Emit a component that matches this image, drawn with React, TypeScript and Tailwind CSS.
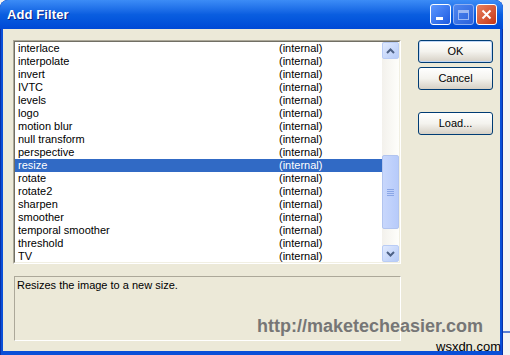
const filters: string[] = [
  'interlace',
  'interpolate',
  'invert',
  'IVTC',
  'levels',
  'logo',
  'motion blur',
  'null transform',
  'perspective',
  'resize',
  'rotate',
  'rotate2',
  'sharpen',
  'smoother',
  'temporal smoother',
  'threshold',
  'TV',
];

const font = "font-['Liberation_Sans',Arial,sans-serif]";

const XpButton = ({ label, isDefault }: { label: string; isDefault?: boolean }) => (
  <div
    className={`h-[23px] w-[75px] rounded-[3px] border ${
      isDefault ? 'border-[#003c74] shadow-[inset_0_0_0_1px_#c0d6f5]' : 'border-[#003c74]'
    } bg-gradient-to-b from-[#ffffff] via-[#f4f3ee] to-[#d6d0c5] flex items-center justify-center text-[11px] text-black`}
  >
    {label}
  </div>
);

const ScrollArrow = ({ up }: { up?: boolean }) => (
  <div className="h-[17px] w-[17px] rounded-[2px] border border-[#b9ccf5] bg-gradient-to-br from-[#e1eafe] to-[#b6cbf7] flex items-center justify-center">
    <svg width="9" height="6" viewBox="0 0 9 6">
      <path
        d={up ? 'M1 5 L4.5 1.5 L8 5' : 'M1 1 L4.5 4.5 L8 1'}
        stroke="#4d6185"
        strokeWidth="2"
        fill="none"
      />
    </svg>
  </div>
);

export default function App() {
  return (
    <div className={`relative flex h-[355px] w-[510px] overflow-hidden bg-[#f4f4f4] ${font}`}>
      {/* window */}
      <div className="flex h-[356px] w-[503px] shrink-0 flex-col rounded-t-[8px] bg-[#0a4fd8] shadow-[inset_0_0_0_1px_#0831a8]">
        {/* title bar */}
        <div className="flex h-[29px] items-center rounded-t-[8px] bg-gradient-to-b from-[#3c8cf6] via-[#0a5ee0] to-[#0049d6] pl-[7px] pr-[6px]">
          <span className="flex-1 text-[13px] font-bold tracking-[0.1px] text-white [text-shadow:1px_1px_0_#0a1d80]">
            Add Filter
          </span>
          <div className="flex gap-[2px]">
            <div className="flex h-[21px] w-[21px] items-end rounded-[3px] border border-white bg-gradient-to-br from-[#5d97ff] to-[#1d5ae0] pb-[4px] pl-[5px]">
              <div className="h-[3px] w-[7px] bg-white" />
            </div>
            <div className="flex h-[21px] w-[21px] items-center justify-center rounded-[3px] border border-[#8eb0f2] bg-gradient-to-br from-[#4f86ef] to-[#2a62dc]">
              <div className="h-[10px] w-[11px] border border-t-[3px] border-[#9cb9f4]" />
            </div>
            <div className="flex h-[21px] w-[21px] items-center justify-center rounded-[3px] border border-white bg-gradient-to-br from-[#e8805f] to-[#c5330f]">
              <svg width="11" height="11" viewBox="0 0 11 11">
                <path d="M1.5 1.5 L9.5 9.5 M9.5 1.5 L1.5 9.5" stroke="white" strokeWidth="2" />
              </svg>
            </div>
          </div>
        </div>

        {/* client area */}
        <div className="mx-[3px] flex h-[322px] gap-[16px] bg-[#ece9d8] pl-[10px] pt-[11px]">
          <div className="flex w-[388px] flex-col gap-[12px]">
            {/* list box */}
            <div className="h-[224px] border border-b-white border-l-[#aca899] border-r-white border-t-[#aca899]">
              <div className="flex h-full border border-b-[#f1efe2] border-l-[#716f64] border-r-[#f1efe2] border-t-[#716f64] bg-white">
                <div className="flex-1 overflow-hidden text-[11px] leading-[13px] text-black">
                  {filters.map((name) => (
                    <div
                      key={name}
                      className={`flex h-[13px] pl-[3px] ${
                        name === 'resize' ? 'bg-[#316ac5] text-white' : ''
                      }`}
                    >
                      <span className="w-[261px]">{name}</span>
                      <span>(internal)</span>
                    </div>
                  ))}
                </div>
                {/* scrollbar */}
                <div className="flex w-[17px] flex-col bg-gradient-to-r from-[#f3f1ec] to-[#fefefb]">
                  <ScrollArrow up />
                  <div className="flex-1 pt-[96px]">
                    <div className="flex h-[74px] w-[17px] flex-col items-center justify-center gap-[1px] rounded-[2px] border border-[#b1c4ef] bg-gradient-to-r from-[#c8d7fc] to-[#b7cbfa]">
                      <div className="h-px w-[7px] bg-[#8aa6e6]" />
                      <div className="h-px w-[7px] bg-[#8aa6e6]" />
                      <div className="h-px w-[7px] bg-[#8aa6e6]" />
                      <div className="h-px w-[7px] bg-[#8aa6e6]" />
                    </div>
                  </div>
                  <ScrollArrow />
                </div>
              </div>
            </div>

            {/* description */}
            <div className="ml-px h-[65px] w-[387px] border border-b-white border-l-[#aca899] border-r-white border-t-[#aca899] px-[2px] pt-[2px] text-[11px] leading-[13px] text-black">
              Resizes the image to a new size.
            </div>
          </div>

          <div className="flex flex-col gap-[4px] pl-px">
            <XpButton label="OK" isDefault />
            <XpButton label="Cancel" />
            <div className="h-[14px]" />
            <XpButton label="Load..." />
          </div>
        </div>
      </div>

      {/* desktop strip */}
      <div className="flex-1 pt-[331px]">
        <div className="h-[2px] bg-[#5a7fd6]" />
      </div>

      {/* watermarks */}
      <span className="absolute left-[257px] top-[316px] text-[18px] font-bold leading-[21px] text-[#767676]">
        http://maketecheasier.com
      </span>
      <span className="absolute left-[436px] top-[337px] text-[13px] text-black">wsxdn.com</span>
    </div>
  );
}
